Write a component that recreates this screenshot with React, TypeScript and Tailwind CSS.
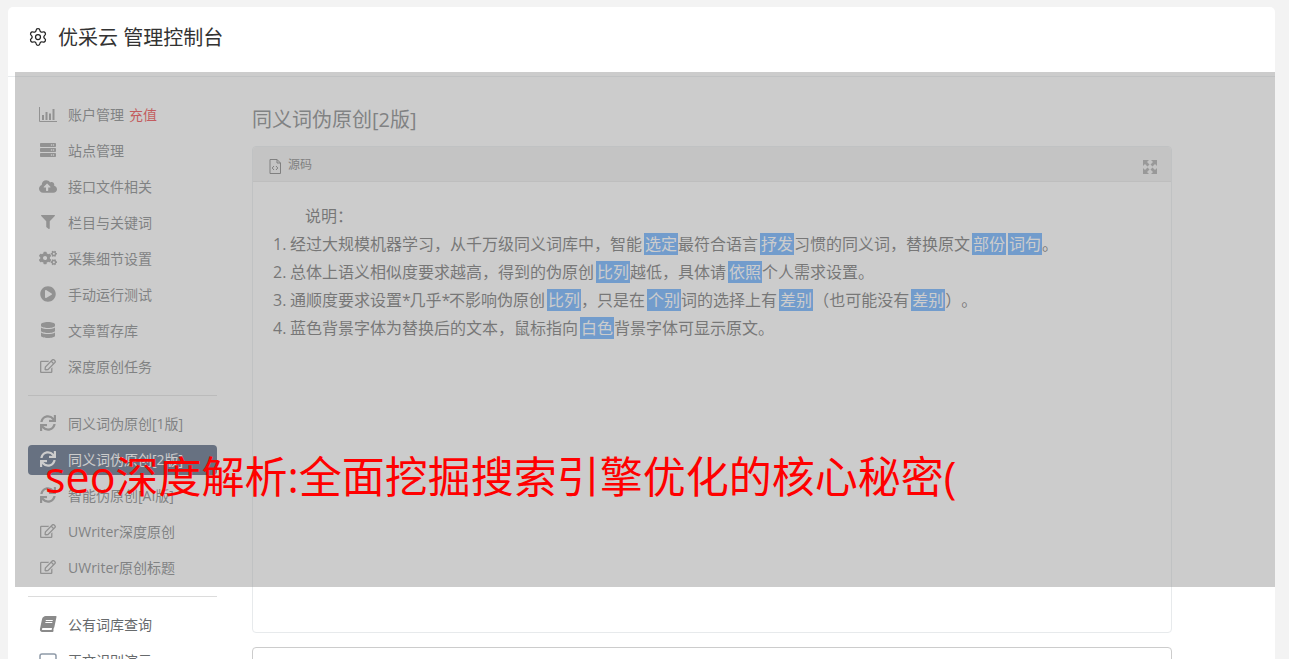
import React from "react";
import { Settings } from "lucide-react";
import {
  FaServer,
  FaCloudUploadAlt,
  FaFilter,
  FaCogs,
  FaPlayCircle,
  FaDatabase,
  FaRegEdit,
  FaSync,
  FaBook,
} from "react-icons/fa";

const font = "font-['Open_Sans','Noto_Sans_CJK_SC',sans-serif]";

function ChartIcon() {
  return (
    <svg width="18" height="15" viewBox="0 0 18 15" fill="none">
      <path d="M0.5 0v14.5H18" stroke="currentColor" />
      <path d="M3 8h2v5H3zM6.5 5h2v8h-2zM10 6.5h2V13h-2zM13.5 2h2v11h-2z" fill="currentColor" />
    </svg>
  );
}

function SourceIcon() {
  return (
    <svg width="12" height="15" viewBox="0 0 12 15" fill="none" stroke="currentColor" className="mt-[4px]">
      <path d="M1 .5h7l3.5 3.5v10.5H1z" />
      <path d="M8 .5V4h3.5" />
      <path d="M5 7L3.2 9 5 11M7 7l1.8 2L7 11" />
    </svg>
  );
}

function ExpandIcon() {
  return (
    <svg width="14" height="14" viewBox="0 0 14 14" fill="currentColor" className="ml-auto mt-[6px] text-[#999]">
      <path d="M0 0h6L4 2l2.5 2.5-2 2L2 4 0 6zM14 0v6l-2-2-2.5 2.5-2-2L10 2 8 0zM0 14V8l2 2 2.5-2.5 2 2L4 12l2 2zM14 14H8l2-2-2.5-2.5 2-2L12 10l2-2z" />
    </svg>
  );
}

function FrameIcon() {
  return (
    <svg width="18" height="15" viewBox="0 0 18 15" fill="none" stroke="#8f9aa8" strokeWidth="1.5">
      <rect x="1" y="1" width="16" height="13" rx="2" />
    </svg>
  );
}

function Row({ icon, label, extra, active }: { icon: React.ReactNode; label: string; extra?: string; active?: boolean }) {
  return (
    <div className="h-[36px] py-[3px]">
      <div
        className={
          active
            ? "h-[30px] pb-[2px] flex items-center pl-[11px] rounded-[4px] bg-[#344868] text-white"
            : "h-[30px] pb-[2px] flex items-center pl-[11px] rounded-[4px] text-[#676a6c]"
        }
      >
        <span className={active ? "w-[18px] flex justify-center text-[16px] shrink-0" : "w-[18px] flex justify-center text-[16px] text-[#8a8a8a] shrink-0"}>
          {icon}
        </span>
        <span className="ml-[11px] text-[14px] whitespace-nowrap">{label}</span>
        {extra && <span className="ml-[5px] text-[14px] text-[#ed1c24]">{extra}</span>}
      </div>
    </div>
  );
}

function Mark({ children }: { children: React.ReactNode }) {
  return <span className="ml-[2px] px-[1px] bg-[#4a9eff] text-white">{children}</span>;
}

function Num({ children }: { children: React.ReactNode }) {
  return <span className="inline-block w-[17px]">{children}</span>;
}

function Star() {
  return <span className="inline-block w-[7.5px]">*</span>;
}

export default function App() {
  return (
    <div className={`relative h-[659px] overflow-hidden bg-[#f3f3f3] pt-[7px] pl-[8px] pr-[14px] ${font}`}>
      <div className="bg-white rounded-t-[5px] h-[700px]">
        <div className="h-[70px] pb-[8px] border-b border-[#e7eaec] flex items-center pl-[20px]">
          <Settings size={20} strokeWidth={1.5} className="text-[#222] mb-[2px]" />
          <span className="ml-[10px] text-[20px] text-[#333] whitespace-pre">优采云 管理控制台</span>
        </div>
        <div className="flex">
          <div className="w-[209px] pl-[20px] pt-[20px] shrink-0">
            <Row icon={<ChartIcon />} label="账户管理" extra="充值" />
            <Row icon={<FaServer />} label="站点管理" />
            <Row icon={<FaCloudUploadAlt className="text-[19px]" />} label="接口文件相关" />
            <Row icon={<FaFilter className="text-[14px]" />} label="栏目与关键词" />
            <Row icon={<FaCogs className="text-[18px]" />} label="采集细节设置" />
            <Row icon={<FaPlayCircle />} label="手动运行测试" />
            <Row icon={<FaDatabase />} label="文章暂存库" />
            <Row icon={<FaRegEdit />} label="深度原创任务" />
            <div className="my-[10px] h-px bg-[#dcdcdc]" />
            <Row icon={<FaSync />} label="同义词伪原创[1版]" />
            <Row icon={<FaSync />} label="同义词伪原创[2版]" active />
            <Row icon={<FaSync />} label="智能伪原创[AI版]" />
            <Row icon={<FaRegEdit />} label="UWriter深度原创" />
            <Row icon={<FaRegEdit />} label="UWriter原创标题" />
            <div className="my-[10px] h-px bg-[#dcdcdc]" />
            <Row icon={<FaBook className="-skew-x-12" />} label="公有词库查询" />
            <Row icon={<FrameIcon />} label="正文识别演示" />
          </div>
          <div className="ml-[35px] w-[920px] shrink-0">
            <h1 className="mt-[29px] h-[28px] leading-[28px] text-[20px] text-[#676a6c]">同义词伪原创[2版]</h1>
            <div className="mt-[12px] h-[487px] border border-[#e7eaec] rounded-[4px]">
              <div className="h-[35px] bg-[#eeeeee] border-b border-[#e2e2e2] rounded-t-[4px] flex items-center pl-[16px] pr-[14px] text-[#666]">
                <SourceIcon />
                <span className="ml-[7px] mt-[2px] text-[12px]">源码</span>
                <ExpandIcon />
              </div>
              <div className="pt-[20px] pl-[20px] text-[16px] leading-[28px] text-[#555] whitespace-nowrap [text-spacing-trim:space-all]">
                <div className="pl-[32px]">说明：</div>
                <div><Num>1.</Num>经过大规模机器学习，从千万级同义词库中，智能<Mark>选定</Mark>最符合语言<Mark>抒发</Mark>习惯的同义词，替换原文<Mark>部份</Mark><Mark>词句</Mark>。</div>
                <div><Num>2.</Num>总体上语义相似度要求越高，得到的伪原创<Mark>比列</Mark>越低，具体请<Mark>依照</Mark>个人需求设置。</div>
                <div><Num>3.</Num>通顺度要求设置<Star />几乎<Star />不影响伪原创<Mark>比列</Mark>，只是在<Mark>个别</Mark>词的选择上有<Mark>差别</Mark>（也可能没有<Mark>差别</Mark>）。</div>
                <div><Num>4.</Num>蓝色背景字体为替换后的文本，鼠标指向<Mark>白色</Mark>背景字体可显示原文。</div>
              </div>
            </div>
            <div className="mt-[14px] h-[60px] border border-[#ccc] rounded-[4px]" />
          </div>
        </div>
      </div>
      <div className="absolute left-[15px] top-[72px] w-[1260px] h-[515px] bg-[#999]/50" />
      <div className="absolute left-[45px] top-[447px] text-[43px] leading-[60px] text-[#ff0000] whitespace-nowrap">
        seo深度解析:全面挖掘搜索引擎优化的核心秘密(
      </div>
    </div>
  );
}
